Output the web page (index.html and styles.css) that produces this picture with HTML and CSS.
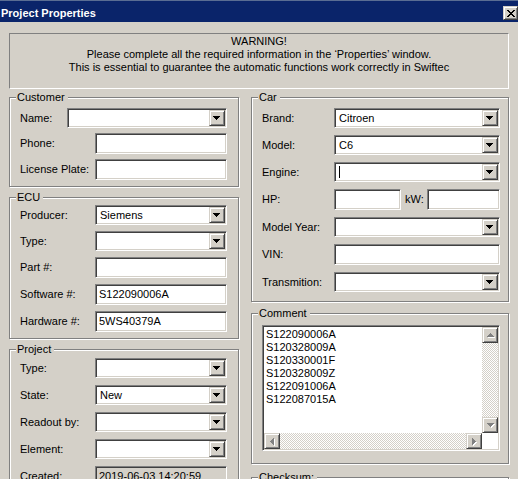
FILE: index.html
```html
<!DOCTYPE html>
<html lang="en">
<head>
<meta charset="utf-8">
<title>Project Properties</title>
<link rel="stylesheet" href="styles.css">
</head>
<body>
<div class="window">
  <header class="titlebar">
    <span class="title">Project Properties</span>
    <span class="close-btn">
      <svg width="8" height="7" viewBox="0 0 8 7" shape-rendering="crispEdges"><path fill="#000" d="M0 0h2v1h-2z M6 0h2v1h-2z M1 1h2v1h-2z M5 1h2v1h-2z M2 2h4v1h-4z M3 3h2v1h-2z M2 4h4v1h-4z M1 5h2v1h-2z M5 5h2v1h-2z M0 6h2v1h-2z M6 6h2v1h-2z"/></svg>
    </span>
  </header>

  <main class="client">
    <div class="warning">
      <p>WARNING!</p>
      <p>Please complete all the required information in the ‘Properties’ window.</p>
      <p>This is essential to guarantee the automatic functions work correctly in Swiftec</p>
    </div>

    <div class="columns">
      <div class="column column-left">
        <section class="group group-customer">
          <span class="group-title">Customer</span>
          <div class="fields fields-left fields-customer">
            <div class="field">
              <span class="field-label label-narrow">Name:</span>
              <div class="combo"><span class="combo-value"></span><span class="combo-btn"><svg width="7" height="4" viewBox="0 0 7 4" shape-rendering="crispEdges"><path d="M0 0h7v1h-1v1h-1v1h-1v1h-1v-1h-1v-1h-1v-1h-1z"/></svg></span></div>
            </div>
            <div class="field">
              <span class="field-label">Phone:</span>
              <div class="textbox"></div>
            </div>
            <div class="field">
              <span class="field-label">License Plate:</span>
              <div class="textbox"></div>
            </div>
          </div>
        </section>

        <section class="group group-ecu">
          <span class="group-title">ECU</span>
          <div class="fields fields-left fields-ecu">
            <div class="field">
              <span class="field-label">Producer:</span>
              <div class="combo"><span class="combo-value">Siemens</span><span class="combo-btn"><svg width="7" height="4" viewBox="0 0 7 4" shape-rendering="crispEdges"><path d="M0 0h7v1h-1v1h-1v1h-1v1h-1v-1h-1v-1h-1v-1h-1z"/></svg></span></div>
            </div>
            <div class="field">
              <span class="field-label">Type:</span>
              <div class="combo"><span class="combo-value"></span><span class="combo-btn"><svg width="7" height="4" viewBox="0 0 7 4" shape-rendering="crispEdges"><path d="M0 0h7v1h-1v1h-1v1h-1v1h-1v-1h-1v-1h-1v-1h-1z"/></svg></span></div>
            </div>
            <div class="field">
              <span class="field-label">Part #:</span>
              <div class="textbox"></div>
            </div>
            <div class="field">
              <span class="field-label">Software #:</span>
              <div class="textbox">S122090006A</div>
            </div>
            <div class="field">
              <span class="field-label">Hardware #:</span>
              <div class="textbox">5WS40379A</div>
            </div>
          </div>
        </section>

        <section class="group group-project">
          <span class="group-title">Project</span>
          <div class="fields fields-left fields-project">
            <div class="field">
              <span class="field-label">Type:</span>
              <div class="combo"><span class="combo-value"></span><span class="combo-btn"><svg width="7" height="4" viewBox="0 0 7 4" shape-rendering="crispEdges"><path d="M0 0h7v1h-1v1h-1v1h-1v1h-1v-1h-1v-1h-1v-1h-1z"/></svg></span></div>
            </div>
            <div class="field">
              <span class="field-label">State:</span>
              <div class="combo"><span class="combo-value">New</span><span class="combo-btn"><svg width="7" height="4" viewBox="0 0 7 4" shape-rendering="crispEdges"><path d="M0 0h7v1h-1v1h-1v1h-1v1h-1v-1h-1v-1h-1v-1h-1z"/></svg></span></div>
            </div>
            <div class="field">
              <span class="field-label">Readout by:</span>
              <div class="combo"><span class="combo-value"></span><span class="combo-btn"><svg width="7" height="4" viewBox="0 0 7 4" shape-rendering="crispEdges"><path d="M0 0h7v1h-1v1h-1v1h-1v1h-1v-1h-1v-1h-1v-1h-1z"/></svg></span></div>
            </div>
            <div class="field">
              <span class="field-label">Element:</span>
              <div class="combo"><span class="combo-value"></span><span class="combo-btn"><svg width="7" height="4" viewBox="0 0 7 4" shape-rendering="crispEdges"><path d="M0 0h7v1h-1v1h-1v1h-1v1h-1v-1h-1v-1h-1v-1h-1z"/></svg></span></div>
            </div>
            <div class="field">
              <span class="field-label">Created:</span>
              <div class="textbox is-readonly">2019-06-03 14:20:59</div>
            </div>
          </div>
        </section>
      </div>

      <div class="column column-right">
        <section class="group group-car">
          <span class="group-title">Car</span>
          <div class="fields fields-right fields-car">
            <div class="field">
              <span class="field-label">Brand:</span>
              <div class="combo"><span class="combo-value">Citroen</span><span class="combo-btn"><svg width="7" height="4" viewBox="0 0 7 4" shape-rendering="crispEdges"><path d="M0 0h7v1h-1v1h-1v1h-1v1h-1v-1h-1v-1h-1v-1h-1z"/></svg></span></div>
            </div>
            <div class="field">
              <span class="field-label">Model:</span>
              <div class="combo"><span class="combo-value">C6</span><span class="combo-btn"><svg width="7" height="4" viewBox="0 0 7 4" shape-rendering="crispEdges"><path d="M0 0h7v1h-1v1h-1v1h-1v1h-1v-1h-1v-1h-1v-1h-1z"/></svg></span></div>
            </div>
            <div class="field">
              <span class="field-label">Engine:</span>
              <div class="combo"><span class="combo-value"><span class="caret"></span></span><span class="combo-btn"><svg width="7" height="4" viewBox="0 0 7 4" shape-rendering="crispEdges"><path d="M0 0h7v1h-1v1h-1v1h-1v1h-1v-1h-1v-1h-1v-1h-1z"/></svg></span></div>
            </div>
            <div class="field">
              <span class="field-label">HP:</span>
              <div class="textbox textbox-hp"></div>
              <span class="field-label label-kw">kW:</span>
              <div class="textbox"></div>
            </div>
            <div class="field">
              <span class="field-label">Model Year:</span>
              <div class="combo"><span class="combo-value"></span><span class="combo-btn"><svg width="7" height="4" viewBox="0 0 7 4" shape-rendering="crispEdges"><path d="M0 0h7v1h-1v1h-1v1h-1v1h-1v-1h-1v-1h-1v-1h-1z"/></svg></span></div>
            </div>
            <div class="field">
              <span class="field-label">VIN:</span>
              <div class="textbox"></div>
            </div>
            <div class="field">
              <span class="field-label">Transmition:</span>
              <div class="combo"><span class="combo-value"></span><span class="combo-btn"><svg width="7" height="4" viewBox="0 0 7 4" shape-rendering="crispEdges"><path d="M0 0h7v1h-1v1h-1v1h-1v1h-1v-1h-1v-1h-1v-1h-1z"/></svg></span></div>
            </div>
          </div>
        </section>

        <section class="group group-comment">
          <span class="group-title">Comment</span>
          <div class="memo">
            <div class="memo-text">
              <div>S122090006A</div>
              <div>S120328009A</div>
              <div>S120330001F</div>
              <div>S120328009Z</div>
              <div>S122091006A</div>
              <div>S122087015A</div>
            </div>
            <div class="vscroll">
              <span class="scroll-btn">
                <svg width="8" height="5" viewBox="0 0 8 5" shape-rendering="crispEdges"><path fill="#fff" transform="translate(1 1)" d="M3 0h1v1h1v1h1v1h1v1h-7v-1h1v-1h1v-1h1z"/><path fill="#808080" d="M3 0h1v1h1v1h1v1h1v1h-7v-1h1v-1h1v-1h1z"/></svg>
              </span>
              <span class="scroll-track"></span>
              <span class="scroll-btn">
                <svg width="8" height="5" viewBox="0 0 8 5" shape-rendering="crispEdges"><path fill="#fff" transform="translate(1 1)" d="M0 0h7v1h-1v1h-1v1h-1v1h-1v-1h-1v-1h-1v-1h-1z"/><path fill="#808080" d="M0 0h7v1h-1v1h-1v1h-1v1h-1v-1h-1v-1h-1v-1h-1z"/></svg>
              </span>
            </div>
            <div class="hscroll">
              <span class="scroll-btn">
                <svg width="5" height="8" viewBox="0 0 5 8" shape-rendering="crispEdges"><path fill="#fff" transform="translate(1 1)" d="M3 0h1v7h-1v-1h-1v-1h-1v-1h-1v-1h1v-1h1v-1h1z"/><path fill="#808080" d="M3 0h1v7h-1v-1h-1v-1h-1v-1h-1v-1h1v-1h1v-1h1z"/></svg>
              </span>
              <span class="scroll-track"></span>
              <span class="scroll-btn">
                <svg width="5" height="8" viewBox="0 0 5 8" shape-rendering="crispEdges"><path fill="#fff" transform="translate(1 1)" d="M0 0h1v1h1v1h1v1h1v1h-1v1h-1v1h-1v1h-1z"/><path fill="#808080" d="M0 0h1v1h1v1h1v1h1v1h-1v1h-1v1h-1v1h-1z"/></svg>
              </span>
            </div>
            <div class="scroll-corner"></div>
          </div>
        </section>

        <section class="group group-checksum">
          <span class="group-title">Checksum:</span>
        </section>
      </div>
    </div>
  </main>
</div>
</body>
</html>
```

FILE: styles.css
```css
* {
  box-sizing: border-box;
}

html,
body {
  margin: 0;
  padding: 0;
}

body {
  width: 518px;
  height: 479px;
  overflow: hidden;
  background: #d4d0c8;
  color: #000;
  font: 11px/13px "Liberation Sans", Arial, sans-serif;
}

p {
  margin: 0;
}

/* ---- caption bar ---- */
.titlebar {
  display: flex;
  justify-content: space-between;
  align-items: flex-start;
  height: 22px;
  background: #0a246a;
  border-top: 1px solid #5a6d93;
  color: #fff;
}

.title {
  padding: 6px 0 0 1px;
  font-weight: bold;
}

.close-btn {
  display: flex;
  align-items: center;
  justify-content: center;
  width: 15px;
  height: 14px;
  margin-top: 5px;
  background: #d4d0c8;
  border: 1px solid;
  border-color: #d4d0c8 #404040 #404040 #d4d0c8;
  box-shadow: inset 1px 1px #fff, inset -1px -1px #808080;
}

.close-btn svg {
  display: block;
}

/* ---- dialog client area ---- */
.client {
  padding: 0 9px;
}

.warning {
  height: 56px;
  margin-top: 11px;
  padding-top: 1px;
  border: 1px solid;
  border-color: #808080 #fff #fff #808080;
  text-align: center;
}

.columns {
  display: grid;
  grid-template-columns: 230px 258px;
  column-gap: 12px;
  align-items: start;
  margin-top: 8px;
}

.column {
  display: flex;
  flex-direction: column;
}

.column-left {
  gap: 10px;
}

.column-right {
  gap: 11px;
}

/* etched group box */
.group {
  position: relative;
  border: 1px solid #808080;
  box-shadow: inset 1px 1px #fff, 1px 1px #fff;
}

.group-title {
  position: absolute;
  top: -7px;
  left: 6px;
  padding: 0 3px 0 1px;
  background: #d4d0c8;
  white-space: nowrap;
}

.group-customer { height: 90px; padding: 10px 11px 0 10px; }
.group-ecu      { height: 142px; padding: 7px 11px 0 10px; }
.group-project  { height: 150px; padding: 8px 11px 0 10px; }
.group-car      { height: 205px; padding: 10px 8px 0 10px; }
.group-comment  { height: 151px; padding: 11px 8px 0 10px; }
.group-checksum { height: 60px; margin-top: 2px; }

/* ---- label + control rows ---- */
.fields {
  display: flex;
  flex-direction: column;
}

.fields-customer { gap: 5px; }
.fields-ecu      { gap: 6px; }
.fields-project  { gap: 7px; }
.fields-car      { gap: 7px; }

.field {
  display: flex;
  align-items: center;
}

.field-label {
  flex: none;
  white-space: nowrap;
}

.fields-left .field-label {
  width: 75px;
}

.fields-right .field-label {
  width: 72px;
}

.fields-left .label-narrow {
  width: 47px;
}

.fields-right .label-kw {
  width: 22px;
  margin-left: 4px;
}

/* sunken edit field */
.textbox {
  flex: 1;
  min-width: 0;
  height: 21px;
  display: flex;
  align-items: center;
  padding: 0 3px;
  background: #fff;
  border: 1px solid;
  border-color: #808080 #fff #fff #808080;
  box-shadow: inset 1px 1px #404040, inset -1px -1px #d4d0c8;
  white-space: nowrap;
}

.textbox.is-readonly {
  background: #d4d0c8;
}

.textbox-hp {
  flex: none;
  width: 67px;
}

/* drop-down list */
.combo {
  flex: 1;
  min-width: 0;
  height: 20px;
  display: flex;
  align-items: center;
  padding: 1px;
  background: #fff;
  border: 1px solid;
  border-color: #808080 #fff #fff #808080;
  box-shadow: inset 1px 1px #404040, inset -1px -1px #d4d0c8;
}

.combo-value {
  flex: 1;
  display: flex;
  align-items: center;
  padding-left: 3px;
  white-space: nowrap;
  overflow: hidden;
}

.caret {
  width: 1px;
  height: 12px;
  margin-left: 0;
  background: #000;
}

.combo-btn,
.scroll-btn {
  flex: none;
  width: 16px;
  height: 16px;
  background: #d4d0c8;
  border: 1px solid;
  border-color: #d4d0c8 #404040 #404040 #d4d0c8;
  box-shadow: inset 1px 1px #fff, inset -1px -1px #808080;
}

.combo-btn {
  padding: 5px 0 0 3px;
}

.combo-btn svg {
  display: block;
}

/* ---- multi-line memo with scroll bars ---- */
.memo {
  display: grid;
  grid-template-columns: 1fr 16px;
  grid-template-rows: 1fr 16px;
  height: 126px;
  padding: 1px;
  background: #fff;
  border: 1px solid;
  border-color: #808080 #fff #fff #808080;
  box-shadow: inset 1px 1px #404040, inset -1px -1px #d4d0c8;
}

.memo-text {
  padding: 1px 2px 0;
  overflow: hidden;
}

.vscroll {
  display: flex;
  flex-direction: column;
}

.hscroll {
  display: flex;
}

.scroll-track {
  flex: 1;
  background: repeating-conic-gradient(#d4d0c8 0 25%, #fff 0 50%) 0 0 / 2px 2px;
}

.scroll-btn {
  display: flex;
  align-items: center;
  justify-content: center;
}

.vscroll .scroll-btn svg {
  margin: 1px 0 0 1px;
}

.hscroll .scroll-btn svg {
  margin: 1px 0 0 1px;
}

.scroll-corner {
  background: #fff;
}
```
